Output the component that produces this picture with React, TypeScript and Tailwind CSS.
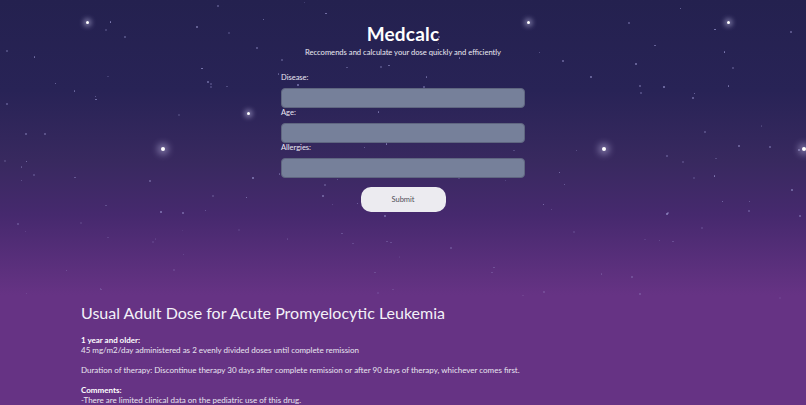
import React from "react";

type Star = { x: number; y: number; s: number; o: number };

function makeStars(): Star[] {
  let seed = 12345;
  const rnd = () => {
    seed = (seed * 1103515245 + 12345) % 2147483648;
    return seed / 2147483648;
  };
  const out: Star[] = [];
  for (let i = 0; i < 150; i++) {
    const y = rnd() * 300;
    out.push({
      x: rnd() * 806,
      y,
      s: rnd() < 0.7 ? 1.5 : 2,
      o: (0.25 + rnd() * 0.45) * (y > 220 ? 0.5 : 1),
    });
  }
  return out;
}

const smallStars = makeStars();

const bigStars = [
  { x: 87, y: 22, s: 3, g: 5 },
  { x: 528, y: 22, s: 3, g: 5 },
  { x: 728, y: 22, s: 3, g: 5 },
  { x: 248, y: 113, s: 3, g: 5 },
  { x: 163, y: 149, s: 4, g: 7 },
  { x: 604, y: 149, s: 4, g: 7 },
  { x: 804, y: 149, s: 4, g: 7 },
];

export default function App() {
  const font = { fontFamily: "Lato, 'Noto Sans', sans-serif" };
  return (
    <div
      className="relative min-h-screen w-full overflow-hidden bg-[linear-gradient(180deg,#24214f_0px,#282356_90px,#38295f_160px,#46296e_215px,#663384_295px,#663384_100%)] text-white"
      style={font}
    >
      <div className="pointer-events-none absolute inset-0">
        {smallStars.map((st, i) => (
          <div
            key={i}
            className="absolute rounded-full bg-[#a9a6e0]"
            style={{ left: st.x, top: st.y, width: st.s, height: st.s, opacity: st.o }}
          />
        ))}
        {bigStars.map((st, i) => (
          <div
            key={"b" + i}
            className="absolute rounded-full bg-white"
            style={{
              left: st.x - st.s / 2,
              top: st.y - st.s / 2,
              width: st.s,
              height: st.s,
              boxShadow: `0 0 ${st.g}px ${st.g / 2}px rgba(220,215,255,0.45)`,
            }}
          />
        ))}
      </div>

      <div className="relative flex flex-col items-center pt-[22px]">
        <h1 className="text-[19px] font-bold leading-[24px] tracking-[0.2px] text-white">Medcalc</h1>
        <p className="mt-[1px] text-[7.6px] leading-[10px] text-[#ebe9f2]">
          Reccomends and calculate your dose quickly and efficiently
        </p>

        <form className="mt-[16px] flex w-[244px] flex-col" onSubmit={(e) => e.preventDefault()}>
          <label className="text-[7.5px] leading-[10px] text-[#ebe8f3]">Disease:</label>
          <input className="mt-[5px] h-[20px] w-full rounded-[4px] border border-[#5f6680] bg-[#76809a] outline-none" />
          <label className="text-[7.5px] leading-[10px] text-[#ebe8f3]">Age:</label>
          <input className="mt-[5px] h-[20px] w-full rounded-[4px] border border-[#5f6680] bg-[#76809a] outline-none" />
          <label className="text-[7.5px] leading-[10px] text-[#ebe8f3]">Allergies:</label>
          <input className="mt-[5px] h-[20px] w-full rounded-[4px] border border-[#5f6680] bg-[#76809a] outline-none" />
          <div className="mt-[9px] flex justify-center">
            <button
              type="submit"
              className="h-[25px] w-[85px] rounded-[10px] bg-[#ecebf0] text-[7.5px] text-[#4f4f58]"
              style={font}
            >
              Submit
            </button>
          </div>
        </form>
      </div>

      <div className="relative mt-[91px] px-[81px]">
        <h2 className="text-[16px] leading-[20px] font-normal text-[#f3f1f8]">
          Usual Adult Dose for Acute Promyelocytic Leukemia
        </h2>
        <div className="mt-[12px] text-[8px] leading-[10px] text-[#e9e5f0]">
          <p className="font-bold text-white">1 year and older:</p>
          <p>45 mg/m2/day administered as 2 evenly divided doses until complete remission</p>
          <p className="mt-[10px]">
            Duration of therapy: Discontinue therapy 30 days after complete remission or after 90 days of therapy, whichever comes first.
          </p>
          <p className="mt-[10px] font-bold text-white">Comments:</p>
          <p>-There are limited clinical data on the pediatric use of this drug.</p>
        </div>
      </div>
    </div>
  );
}
